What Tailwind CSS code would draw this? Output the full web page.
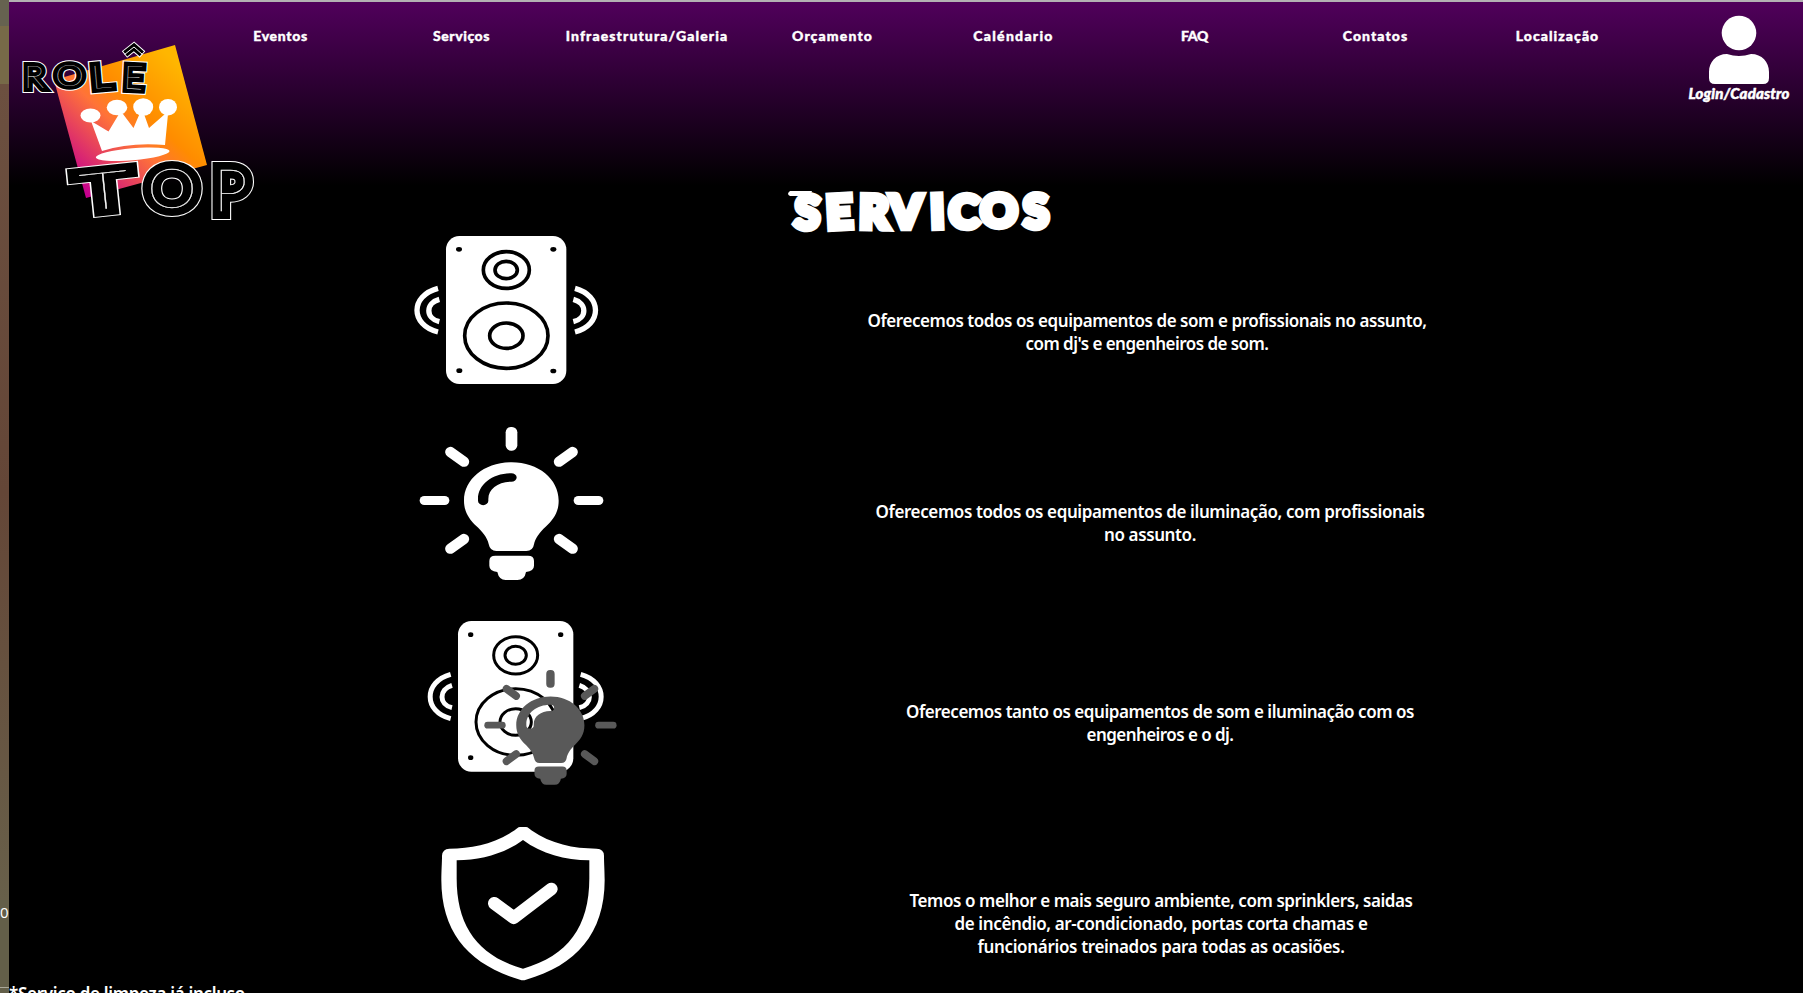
<!DOCTYPE html>
<html lang="pt-br">
<head>
<meta charset="utf-8">
<title>Rolê Top - Serviços</title>
<script src="https://cdn.jsdelivr.net/npm/@tailwindcss/browser@4"></script>
</head>
<body class="flex h-[993px] w-[1803px] overflow-hidden bg-black text-white">
<!-- side strip -->
<aside class="flex h-full w-[9px] shrink-0 flex-col overflow-hidden">
  <div class="h-[26px] shrink-0 bg-[#666250]"></div>
  <div class="h-[58px] shrink-0 bg-[#776a48]"></div>
  <div class="h-[816px] shrink-0 bg-linear-to-b from-[#6c5040] via-[#644637] to-[#68604a]"></div>
  <div class="h-[87px] shrink-0 bg-[#635f49] font-['Open_Sans',sans-serif] text-[15px] leading-[24px]">0</div>
  <div class="h-px shrink-0 bg-[#aaa89a]"></div>
  <div class="h-[5px] shrink-0 bg-[#635f49]"></div>
</aside>

<div class="flex h-full w-[1794px] flex-col overflow-hidden border-t-2 border-[#b3b0b3] bg-[linear-gradient(to_bottom,#50005b_0,#000_184px)]">
  <header class="flex h-[175px] shrink-0">
    <svg class="h-[230px] w-[181px] shrink-0 overflow-visible" viewBox="9 2 181 230" role="img" aria-label="Rolê Top">
      <defs>
        <linearGradient id="sq" gradientUnits="userSpaceOnUse" x1="72" y1="180" x2="180" y2="66">
          <stop offset="0" stop-color="#c6008e"/><stop offset=".45" stop-color="#ff7338"/><stop offset=".63" stop-color="#ff8c00"/><stop offset="1" stop-color="#ffb600"/>
        </linearGradient>
        <g id="role" font-family="Lato, sans-serif" font-weight="100" font-size="31">
          <text transform="translate(24 88) scale(1.1 1)">R</text>
          <text transform="translate(55 86) scale(1.2 .95)">O</text>
          <text transform="translate(92 89) rotate(-5) scale(1.3 1.05)">L</text>
          <text transform="translate(123 88.500) rotate(3) scale(1.1 1.05)">E</text>
        </g>
        <g id="top" font-family="Lato, sans-serif" font-weight="100" font-size="57">
          <text transform="translate(82 211) rotate(-6) scale(1.5 .9)">T</text>
          <text transform="translate(147 208) scale(1.12 1)">O</text>
          <text transform="translate(214 211) scale(1.05 1)">P</text>
        </g>
      </defs>
      <path d="M175 45 207 165 86 198 54 80Z" fill="url(#sq)"/>
      <g fill="#fff">
        <ellipse cx="90.5" cy="115.5" rx="10" ry="7"/><ellipse cx="117" cy="107.5" rx="10.3" ry="7.7"/><ellipse cx="143.2" cy="107" rx="10" ry="8.7"/><ellipse cx="168" cy="107.2" rx="9" ry="8.3"/>
        <path d="M91 121 108.500 131.500 119 114H123L133.500 128 139.500 114H144L149 128 165 114H168L165 145Q130 142 102 151Z"/>
        <ellipse cx="132.700" cy="154.300" rx="37" ry="6" transform="rotate(-5 132.700 154.300)"/>
      </g>
      <g fill="none">
        <path d="M124.500 54.500 134 47 142.500 54.500" stroke="#fff" stroke-width="8.500"/>
        <path d="M125.200 53.900 134 47 141.800 53.900" stroke="#000" stroke-width="6.500"/>
        <path d="M124.500 54.500 134 47 142.500 54.500" stroke="#fff" stroke-width="1"/>
      </g>
      <g stroke-linejoin="miter">
        <use href="#role" stroke="#fff" stroke-width="10" fill="#fff"/>
        <use href="#role" stroke="#000" stroke-width="8" fill="#000"/>
        <use href="#role" fill="#fff"/>
        <use href="#top" stroke="#fff" stroke-width="18" fill="#fff"/>
        <use href="#top" stroke="#000" stroke-width="16" fill="#000"/>
        <use href="#top" fill="#fff" stroke="#fff" stroke-width=".3"/>
      </g>
    </svg>
    <nav class="grid h-[67px] w-[1459px] shrink-0 grid-cols-[181px_181px_190px_181px_181px_181px_181px_183px] items-center text-center font-['Lato',sans-serif] text-[14px] font-black [-webkit-text-stroke:0.4px_white]">
      <a><span data-w="54.5">Eventos</span></a>
      <a><span data-w="57">Serviços</span></a>
      <a><span data-w="162.5">Infraestrutura/Galeria</span></a>
      <a><span data-w="81">Orçamento</span></a>
      <a><span data-w="80.5">Caléndario</span></a>
      <a><span data-w="27">FAQ</span></a>
      <a><span data-w="65.5">Contatos</span></a>
      <a><span data-w="83.5">Localização</span></a>
    </nav>
    <a class="flex flex-1 flex-col items-center pt-[13px] pl-[26px]">
      <svg class="h-[70px] w-[62px]" viewBox="0 0 62 70" fill="#fff">
        <circle cx="31" cy="18" r="17.300"/>
        <path d="M19 39Q31 43 43 39C54 39 61 47 61 57V63Q61 69 55 69H7Q1 69 1 63V57C1 47 8 39 19 39Z"/>
      </svg>
      <span class="font-['Lato',sans-serif] text-[15px] leading-[17px] font-black whitespace-nowrap italic [font-variant-ligatures:none] [-webkit-text-stroke:0.5px_white]" data-w="101">Login/Cadastro</span>
    </a>
  </header>

  <main class="flex flex-col">
    <h1 class="h-[48px]">
      <svg class="ml-[769px] h-[66px] w-[290px] overflow-visible" viewBox="778 177 290 66">
        <path d="M790 191H812L810 196H790Q786 194 790 191Z" fill="#fff"/>
        <text font-family="Lato, sans-serif" font-weight="900" font-size="45.500" fill="#fff" stroke="#fff" stroke-width="6.500" y="228 229 228 228 228 228 226.500 228" x="794 827 859 890 931 949 980.500 1024" rotate="3 -3 1 0 -2 0 0 -2">SERVICOS</text>
      </svg>
    </h1>

    <section class="mb-[20px] flex h-[170px] pl-[391px]">
      <svg class="h-[170px] w-[220px]" viewBox="0 0 660 510">
        <rect x="138" y="33" width="361" height="444" rx="40" fill="#fff"/>
        <g fill="none" stroke="#000" stroke-width="11">
          <ellipse cx="319" cy="135" rx="69" ry="55"/><ellipse cx="318.500" cy="135" rx="33.500" ry="26"/>
          <ellipse cx="319" cy="332" rx="125" ry="98"/><ellipse cx="319" cy="332" rx="50" ry="38"/>
        </g>
        <g><ellipse cx="177" cy="73" rx="9" ry="7"/><ellipse cx="460" cy="73" rx="9" ry="7"/><ellipse cx="178" cy="437" rx="9" ry="7"/><ellipse cx="460" cy="438" rx="9" ry="7"/></g>
        <g fill="none" stroke="#fff" stroke-width="16">
          <path d="M114 190C30 212 30 300 114 321"/><path d="M118 223C76 234 76 280 118 290"/>
          <path d="M525 190C607 212 607 300 525 321"/><path d="M520 223C562 234 562 280 520 290"/>
        </g>
      </svg>
      <p class="ml-[227px] w-[600px] pt-[84px] text-center font-['Noto_Sans',sans-serif] text-[17px] leading-[23px] font-semibold whitespace-nowrap"><span data-w="559">Oferecemos todos os equipamentos de som e profissionais no assunto,</span><br><span data-w="243">com dj's e engenheiros de som.</span></p>
    </section>

    <section class="mb-[15px] flex h-[180px] pl-[391px]">
      <svg class="h-[180px] w-[220px] text-white" viewBox="0 0 660 540" fill="#fff">
        <g id="bulb">
          <path fill-rule="evenodd" d="M335 142C415 142 476 192 476 257C476 293 459 315 437 335C419 351 405 371 402 388Q399 408 379 408H289Q270 408 266 387C262 367 246 348 228 332C208 314 192 290 192 257C192 192 254 142 335 142ZM334 175C278 175 234 208 234 252V257A15 13 0 0 0 265 257V252C265 222 294 200 334 200A16 12.500 0 0 0 334 175Z"/>
          <path d="M286 422H384Q402 422 402 438V452Q402 468 378 471Q374 495 352 495H317Q297 495 292 471Q268 468 268 452V438Q268 422 286 422Z"/>
          <rect x="317" y="36" width="35" height="71" rx="16"/>
          <rect x="59" y="243" width="89" height="27" rx="14"/><rect x="521" y="243" width="89" height="27" rx="14"/>
          <g fill="none" stroke="currentColor" stroke-width="31" stroke-linecap="round"><path d="M151 111 192 140M518 111 477 140M151 401 192 372M518 401 477 372"/></g>
        </g>
      </svg>
      <p class="ml-[230px] w-[600px] pt-[85px] text-center font-['Noto_Sans',sans-serif] text-[17px] leading-[23px] font-semibold whitespace-nowrap"><span data-w="549">Oferecemos todos os equipamentos de iluminação, com profissionais</span><br><span data-w="92">no assunto.</span></p>
    </section>

    <section class="mb-[10px] flex h-[190px] pl-[401px]">
      <svg class="h-[190px] w-[220px]" viewBox="0 0 660 570">
        <rect x="144" y="33" width="346" height="452" rx="40" fill="#fff"/>
        <g fill="none" stroke="#000" stroke-width="9">
          <ellipse cx="317" cy="136" rx="66" ry="56"/><ellipse cx="317" cy="136" rx="32" ry="27"/>
          <ellipse cx="317" cy="336" rx="119" ry="100"/><ellipse cx="317" cy="336" rx="47" ry="40"/>
        </g>
        <g><ellipse cx="182" cy="74" rx="8" ry="7"/><ellipse cx="452" cy="74" rx="8" ry="7"/><ellipse cx="182" cy="443" rx="8" ry="7"/></g>
        <g fill="none" stroke="#fff" stroke-width="15">
          <path d="M122 193C40 215 40 306 122 326"/><path d="M126 226C86 238 86 284 126 293"/>
          <path d="M512 193C594 215 594 306 512 326"/><path d="M508 226C548 238 548 284 508 293"/>
        </g>
        <g class="text-[#595959]" fill="#595959" transform="translate(180.500 153) scale(.72 .75)"><use href="#bulb"/></g>
      </svg>
      <p class="ml-[230px] w-[600px] pt-[90px] text-center font-['Noto_Sans',sans-serif] text-[17px] leading-[23px] font-semibold whitespace-nowrap"><span data-w="508">Oferecemos tanto os equipamentos de som e iluminação com os</span><br><span data-w="147">engenheiros e o dj.</span></p>
    </section>

    <section class="flex h-[172px] pl-[411px]">
      <svg class="h-[183px] w-[220px] shrink-0" viewBox="0 0 660 549" fill="#fff">
        <path fill-rule="evenodd" d="M300 51H318C324 51 329 57 334 61C394 102 460 116 530 116Q552 117 552 137C552 160 554 180 554 210C554 370 468 467 318 509Q309 512 300 509C150 465 64 370 64 210C64 180 66 160 66 137Q67 117 88 116C156 116 222 102 284 61C289 57 294 51 300 51ZM309 90C252 132 184 150 110 151V205C110 350 174 438 309 476C444 438 508 350 508 205V151C434 150 366 132 309 90Z"/>
        <path d="M223 280 281 323 394 237" fill="none" stroke="#fff" stroke-width="38" stroke-linecap="round" stroke-linejoin="round"/>
      </svg>
      <p class="ml-[221px] w-[600px] pt-[79px] text-center font-['Noto_Sans',sans-serif] text-[17px] leading-[23px] font-semibold whitespace-nowrap"><span data-w="503">Temos o melhor e mais seguro ambiente, com sprinklers, saidas</span><br><span data-w="413">de incêndio, ar-condicionado, portas corta chamas e</span><br><span data-w="367">funcionários treinados para todas as ocasiões.</span></p>
    </section>
    <p class="font-['Noto_Sans',sans-serif] text-[17px] leading-[23px] font-semibold whitespace-nowrap"><span data-w="236">*Serviço de limpeza já incluso</span></p>
  </main>
</div>
<script>
// Track each line so that it fills the width given in data-w.
function fit() {
  document.querySelectorAll('[data-w]').forEach(function (el) {
    el.style.letterSpacing = '0px';
    var extra = (Number(el.dataset.w) - el.getBoundingClientRect().width) / el.textContent.length;
    el.style.letterSpacing = extra.toFixed(3) + 'px';
  });
}
fit();
window.addEventListener('load', fit);
document.fonts.ready.then(fit);
</script>
</body>
</html>
